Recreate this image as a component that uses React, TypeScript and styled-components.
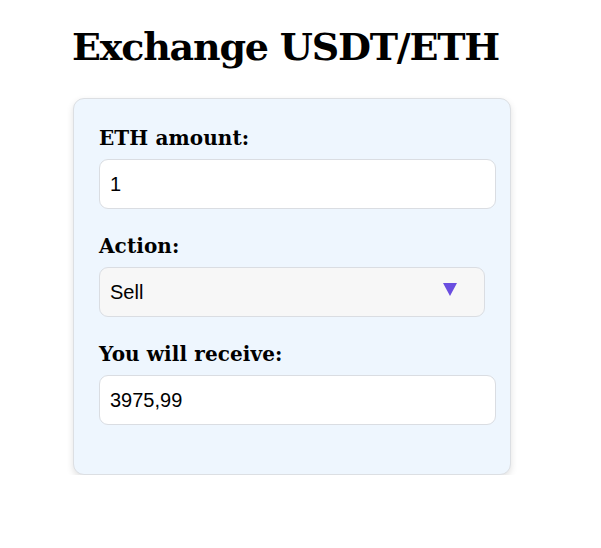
import React, { useState } from "react";
import styled, { createGlobalStyle } from "styled-components";

const Global = createGlobalStyle`
  html, body { margin: 0; padding: 0; background: #ffffff; }
  body { font-family: "DejaVu Serif", "Liberation Serif", serif; color: #000; }
`;

const Page = styled.div`
  padding: 23px 0 0 73px;
  width: 438px;
`;

const Title = styled.h1`
  margin: 0 0 27px -1px;
  font-family: "DejaVu Serif", serif;
  font-weight: 700;
  font-size: 38px;
  line-height: 48px;
  letter-spacing: -1.2px;
  white-space: nowrap;
  color: #000;
`;

const Card = styled.div`
  box-sizing: border-box;
  width: 438px;
  height: 377px;
  padding: 26px 14px 0 25px;
  background: #eef6fe;
  border: 1px solid #dcdfe3;
  border-radius: 11px;
  box-shadow: 0 3px 7px rgba(0, 0, 0, 0.12);
`;

const Field = styled.div`
  display: flex;
  flex-direction: column;
  gap: 8px;
  margin-bottom: 24px;
`;

const Label = styled.label`
  font-family: "DejaVu Serif", serif;
  font-weight: 700;
  font-size: 20px;
  line-height: 26px;
  letter-spacing: 0.1px;
  color: #000;
`;

const Box = styled.div<{ $w: number; $bg: string }>`
  box-sizing: border-box;
  width: ${(p) => p.$w}px;
  height: 50px;
  display: flex;
  align-items: center;
  justify-content: space-between;
  padding: 0 27px 0 10px;
  background: ${(p) => p.$bg};
  border: 1px solid #dadde2;
  border-radius: 9px;
  font-family: "Liberation Sans", Arial, sans-serif;
  font-size: 20px;
  color: #000;
`;

const Arrow = styled.svg`
  width: 14px;
  height: 13px;
  margin-top: -6px;
`;

export default function App() {
  const [amount] = useState("1");
  return (
    <>
      <Global />
      <Page>
        <Title>Exchange USDT/ETH</Title>
        <Card>
          <Field>
            <Label>ETH amount:</Label>
            <Box $w={397} $bg="#ffffff">{amount}</Box>
          </Field>
          <Field>
            <Label>Action:</Label>
            <Box $w={386} $bg="#f7f7f7">
              <span>Sell</span>
              <Arrow viewBox="0 0 14 13">
                <path d="M0 0 H14 L7 13 Z" fill="#6a4ee0" />
              </Arrow>
            </Box>
          </Field>
          <Field>
            <Label>You will receive:</Label>
            <Box $w={397} $bg="#ffffff">3975,99</Box>
          </Field>
        </Card>
      </Page>
    </>
  );
}
